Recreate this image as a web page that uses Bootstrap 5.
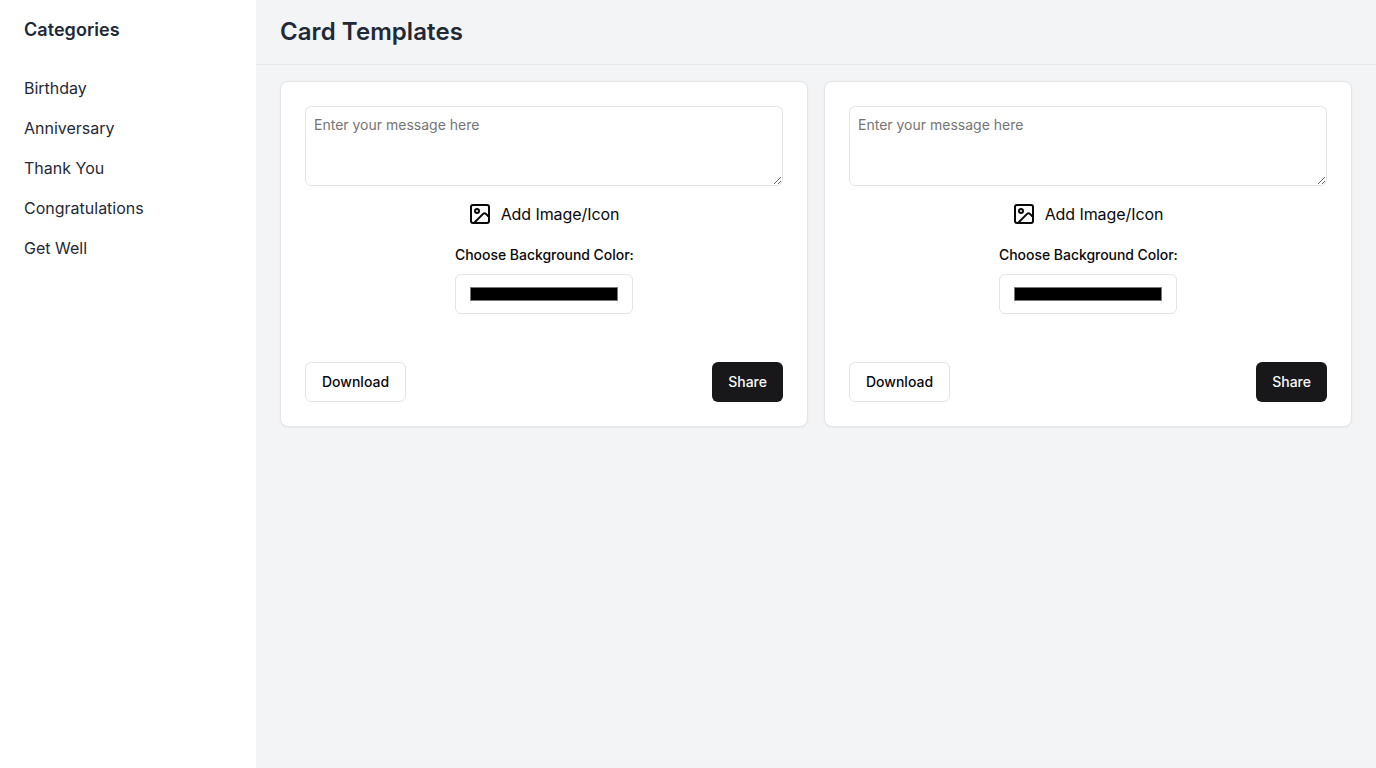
<!DOCTYPE html>
<html lang="en">
<head>
<meta charset="utf-8">
<meta name="viewport" content="width=device-width, initial-scale=1">
<title>Card Templates</title>
<link rel="stylesheet" href="https://cdn.jsdelivr.net/npm/bootstrap@5.3.0/dist/css/bootstrap.min.css">
<style>
  body { font-family: Inter, sans-serif; color: #09090b; background: #f3f4f6; }
  .sidebar { width: 256px; color: #1f2937; }
  .sidebar h2 { font-size: 18px; line-height: 28px; padding: 16px 24px; letter-spacing: .05px; }
  .sidebar .nav { padding-top: 8px; }
  .sidebar .nav-link { color: inherit; padding: 8px 24px; line-height: 24px; }
  .sidebar .nav-link:hover { background: #e5e7eb; }
  .topbar { padding: 16px 24px; border-bottom: 1px solid #e5e7eb; }
  .topbar h1 { font-size: 24px; line-height: 32px; color: #1f2937; letter-spacing: .07px; }
  .template-grid { padding: 16px 24px; }
  .template-card { border: 1px solid #e4e4e7; border-radius: 8px; box-shadow: 0 1px 2px rgba(0,0,0,.05); color: inherit; }
  .template-card .card-body { padding: 24px; color: inherit; }
  .message { height: 80px; padding: 8px; font-size: 14px; line-height: 20px; border: 1px solid #e4e4e7; border-radius: 6px; }
  .message::placeholder { color: #757575; }
  .add-image { letter-spacing: -.08px; padding-right: 1px; }
  .image-row { column-gap: 9px; }
  .color-field { width: 178px; }
  .color-label { font-size: 14px; font-weight: 500; line-height: 14px; letter-spacing: -.04px; }
  .color-line { line-height: 24px; white-space: nowrap; }
  .color-input { height: 40px; padding: 12px 14px; border: 1px solid #e4e4e7; border-radius: 6px; background: #fff; }
  .action { height: 40px; padding: 0 16px; font-size: 14px; font-weight: 500; line-height: 20px; border-radius: 6px; }
  .action-outline { --bs-btn-color: #09090b; --bs-btn-bg: #fff; --bs-btn-border-color: #e4e4e7; }
  .action-solid { --bs-btn-color: #fafafa; --bs-btn-bg: #18181b; --bs-btn-border-width: 0; }
  .actions { margin-top: 48px; }
</style>
</head>
<body>
<div class="d-flex vh-100">
  <aside class="sidebar bg-white flex-shrink-0">
    <h2 class="fw-semibold mb-0">Categories</h2>
    <nav class="nav flex-column">
      <a class="nav-link" href="#">Birthday</a>
      <a class="nav-link" href="#">Anniversary</a>
      <a class="nav-link" href="#">Thank You</a>
      <a class="nav-link" href="#">Congratulations</a>
      <a class="nav-link" href="#">Get Well</a>
    </nav>
  </aside>
  <main class="flex-grow-1">
    <header class="topbar"><h1 class="fw-semibold mb-0">Card Templates</h1></header>
    <div class="template-grid">
      <div class="row row-cols-2 gx-3">
        <div class="col">
          <div class="card template-card">
            <div class="card-body">
              <textarea class="message d-block w-100" placeholder="Enter your message here"></textarea>
              <div class="image-row d-flex justify-content-center align-items-center mt-3">
                <svg width="24" height="24" viewBox="0 0 24 24" fill="none" stroke="currentColor" stroke-width="2" stroke-linecap="round" stroke-linejoin="round"><rect width="18" height="18" x="3" y="3" rx="2" ry="2"/><circle cx="9" cy="9" r="2"/><path d="m21 15-3.086-3.086a2 2 0 0 0-2.828 0L6 21"/></svg>
                <span class="add-image">Add Image/Icon</span>
              </div>
              <div class="d-flex justify-content-center mt-3">
                <div class="color-field d-flex flex-column gap-2">
                  <div class="color-line"><label class="color-label" for="color1">Choose Background Color:</label></div>
                  <input class="color-input w-100" type="color" id="color1" value="#000000">
                </div>
              </div>
              <div class="actions d-flex justify-content-between">
                <button class="btn action action-outline" type="button">Download</button>
                <button class="btn action action-solid" type="button">Share</button>
              </div>
            </div>
          </div>
        </div>
        <div class="col">
          <div class="card template-card">
            <div class="card-body">
              <textarea class="message d-block w-100" placeholder="Enter your message here"></textarea>
              <div class="image-row d-flex justify-content-center align-items-center mt-3">
                <svg width="24" height="24" viewBox="0 0 24 24" fill="none" stroke="currentColor" stroke-width="2" stroke-linecap="round" stroke-linejoin="round"><rect width="18" height="18" x="3" y="3" rx="2" ry="2"/><circle cx="9" cy="9" r="2"/><path d="m21 15-3.086-3.086a2 2 0 0 0-2.828 0L6 21"/></svg>
                <span class="add-image">Add Image/Icon</span>
              </div>
              <div class="d-flex justify-content-center mt-3">
                <div class="color-field d-flex flex-column gap-2">
                  <div class="color-line"><label class="color-label" for="color2">Choose Background Color:</label></div>
                  <input class="color-input w-100" type="color" id="color2" value="#000000">
                </div>
              </div>
              <div class="actions d-flex justify-content-between">
                <button class="btn action action-outline" type="button">Download</button>
                <button class="btn action action-solid" type="button">Share</button>
              </div>
            </div>
          </div>
        </div>
      </div>
    </div>
  </main>
</div>
<script src="https://cdn.jsdelivr.net/npm/bootstrap@5.3.0/dist/js/bootstrap.bundle.min.js"></script>
</body>
</html>
